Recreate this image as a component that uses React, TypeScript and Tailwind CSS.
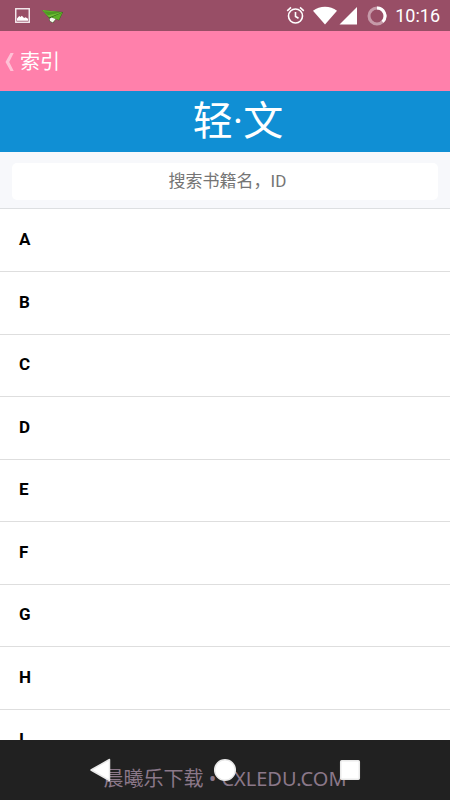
import { useState } from "react";

const letters = ["A", "B", "C", "D", "E", "F", "G", "H", "I"];

// Android status bar: notifications on the left, system icons on the right
function StatusBar() {
  return (
    <div className="flex h-[31px] shrink-0 items-center justify-between bg-[#984e66] pl-[15px] pr-[10px] text-white">
      <div className="flex items-center gap-3">
        <svg width="15" height="15" viewBox="0 0 15 15" aria-hidden="true">
          <rect x="0.75" y="0.75" width="13.5" height="13.5" fill="none" stroke="#f6eef1" strokeWidth="1.4" />
          <path d="M2 12.7V10.400l2.200-2.300 1.200.8 1.400-1.200 2.300 2.200 1.500-.6 2.400 1.500v1.900z" fill="#fff" />
        </svg>
        <svg width="21" height="14" viewBox="0 0 21 14" aria-hidden="true">
          <path d="M0 1 21 3 17 11.500 14 10 11 14 7.500 12 7 9z" fill="#2f5d1c" />
          <path d="M0 1 20.500 3.200 7 8.500z" fill="#6fbd34" />
          <path d="M1.500 2.200 20 3.300 6 6.200z" fill="#4c9a22" />
          <path d="M20.500 3.500 9.500 8.300 16.800 11z" fill="#5cb026" />
          <path d="M7.500 9.800 9.500 8.600 13.700 10 10.800 13.500 8 12z" fill="#f5faef" />
        </svg>
      </div>
      <div className="flex items-center">
        <svg width="19" height="19" viewBox="0 0 19 19" fill="none" stroke="#fff" strokeWidth="1.6" aria-hidden="true">
          <circle cx="9.5" cy="10" r="7" />
          <path d="M9.5 6v4.5l3 1.8M1.2 4.8l3.8-3.400M17.800 4.800L14 1.400" />
        </svg>
        <svg className="ml-[8px]" width="45" height="19" viewBox="0 0 45 19" fill="#fff" aria-hidden="true">
          <path d="M0 4.700C3.500 2 7.500.8 12 .8S20.500 2 24 4.700L12 18.500z" />
          <path d="M44 1v17.500H26.500z" />
        </svg>
        <svg className="ml-[9px]" width="20" height="20" viewBox="0 0 20 20" fill="none" strokeWidth="3" aria-hidden="true">
          <circle cx="10" cy="10" r="8" stroke="#c69aa9" />
          <path d="M10 2a8 8 0 0 1 5.600 13.700" stroke="#fff" />
        </svg>
        <span className="ml-[8px] font-[Roboto] text-[18px] leading-5">10:16</span>
      </div>
    </div>
  );
}

// bottom buttons, drawn above the site mark
function NavBar() {
  return (
    <nav className="relative flex h-[60px] shrink-0 justify-center bg-[#212121]">
      <p className="absolute inset-x-0 top-[27px] text-center font-['Noto_Sans','Noto_Sans_CJK_SC',sans-serif] text-[20px] leading-6 text-[#8b7889]">
        晨曦乐下载 • CXLEDU.COM
      </p>
      <div className="relative flex w-full justify-center gap-[101px] pt-[18px]">
        <button aria-label="返回" className="h-6 w-6">
          <svg width="24" height="24" viewBox="0 0 24 24">
            <path d="M3 12 21.500 1.500v21z" fill="#fff" stroke="#e9e9e9" strokeWidth="1.500" strokeLinejoin="round" />
          </svg>
        </button>
        <button aria-label="主页" className="h-6 w-6">
          <svg width="24" height="24" viewBox="0 0 24 24">
            <circle cx="12" cy="12" r="10.300" fill="#fff" stroke="#e9e9e9" strokeWidth="1.500" />
          </svg>
        </button>
        <button aria-label="最近任务" className="h-6 w-6">
          <svg width="24" height="24" viewBox="0 0 24 24">
            <rect x="2.700" y="2.700" width="18.600" height="18.600" rx="1" fill="#fff" stroke="#e9e9e9" strokeWidth="1.500" />
          </svg>
        </button>
      </div>
    </nav>
  );
}

export default function App() {
  const [keyword, setKeyword] = useState("");

  return (
    <div className="flex h-screen flex-col overflow-hidden bg-white font-[Roboto,'Noto_Sans_CJK_SC',sans-serif]">
      <StatusBar />
      <header className="flex h-[60px] shrink-0 items-center bg-[#ff80ab] pl-[5px] pt-[2px]">
        <button className="flex items-center gap-[5px] text-[20px] leading-6 text-white">
          <svg width="10" height="18" viewBox="0 0 10 18" aria-hidden="true">
            <path d="M5.500 0h3.200L4.200 9l4.500 9H5.500L.5 9z" fill="#ffc1d6" />
          </svg>
          索引
        </button>
      </header>
      <h1 className="flex h-[61px] shrink-0 items-center justify-center bg-[#108fd4] pl-[26px] text-[40px] font-normal leading-[48px] text-white">
        轻·文
      </h1>
      <div className="h-[57px] shrink-0 border-b border-[#dddfe1] bg-[#f7f8fb] px-3 pt-[11px]">
        <input
          type="text"
          aria-label="搜索书籍名，ID"
          placeholder="搜索书籍名，ID"
          value={keyword}
          onChange={(e) => setKeyword(e.target.value)}
          className="h-[37px] w-full rounded-[5px] bg-white pb-[2px] pl-[5px] text-center text-[17px] text-[#555] outline-none placeholder:text-[#757575]"
        />
      </div>
      <ul className="min-h-0 flex-1 overflow-y-auto [scrollbar-width:none]">
        {letters.map((letter) => (
          <li key={letter} className="h-[62px] border-b border-[#dedede] first:h-[63px] even:h-[63px]">
            <button className="flex h-full w-full items-center pb-[3px] pl-[19px] text-left text-[17px] font-bold leading-5 text-black">
              {letter}
            </button>
          </li>
        ))}
      </ul>
      <NavBar />
    </div>
  );
}
